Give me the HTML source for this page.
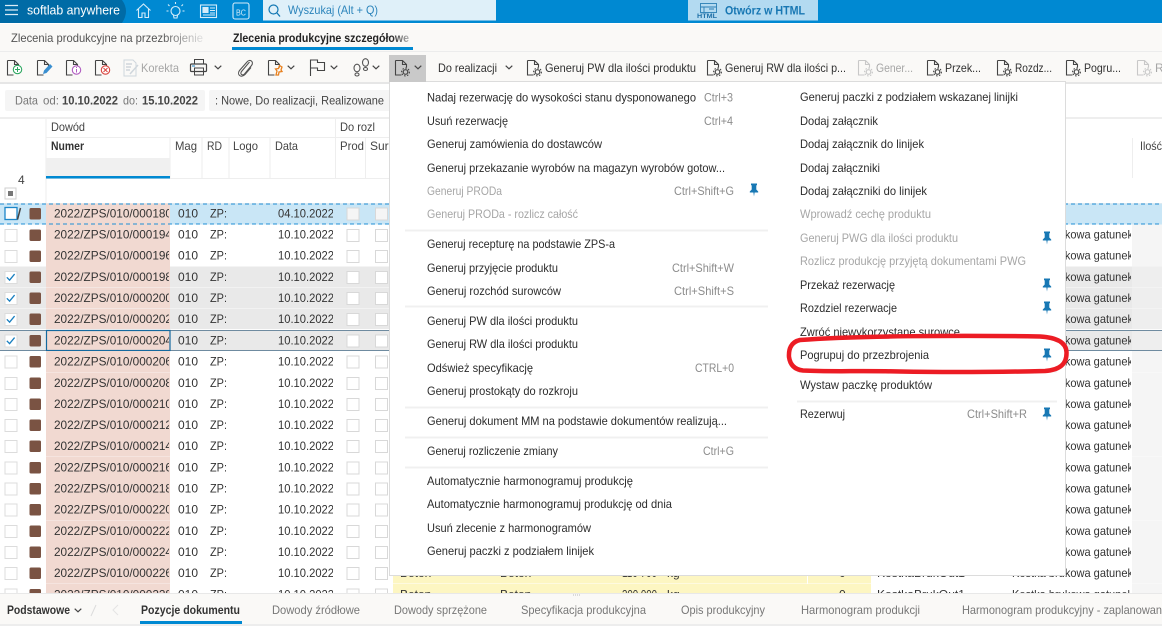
<!DOCTYPE html>
<html lang="pl"><head><meta charset="utf-8"><title>softlab anywhere</title>
<style>
html,body{margin:0;padding:0;background:#fff;overflow:hidden}
svg{display:block;font-family:"Liberation Sans",sans-serif;font-size:12px;fill:#333;filter:blur(.35px)}
.m{fill:#2c2c2c}.g{fill:#a6a6a6}.s{fill:#8c8c8c}.t{fill:#303030}.h{fill:#444}.l{fill:#777}
.i{fill:none;stroke:#444;stroke-width:1}
</style></head><body>
<svg xmlns="http://www.w3.org/2000/svg" width="1162" height="626" viewBox="0 0 1162 626">
<defs>
<symbol id="doc" viewBox="0 0 18 18" width="18" height="18" overflow="visible"><path d="M2.500 1.500h7l4 4v3M2.500 1.500v14.500h6M9.500 1.500v4h4" fill="none" stroke="currentColor" stroke-width="1.100"/></symbol>
<symbol id="gdoc" viewBox="0 0 18 18" width="18" height="18" overflow="visible"><path d="M2.500 1.500h7l4 4v3M2.500 1.500v14.500h6M9.500 1.500v4h4" fill="none" stroke="currentColor" stroke-width="1.100"/><circle cx="12.500" cy="13" r="2.300" fill="none" stroke="currentColor" stroke-width="1.200"/><circle cx="12.500" cy="13" r="3.900" fill="none" stroke="currentColor" stroke-width="1.100" stroke-dasharray="1.500 1.500"/></symbol>
<symbol id="pin" viewBox="0 0 10 14" width="10" height="14"><path d="M2 0.500h6v1.500l-.7.500v4l1.900 2v1H5.600l-.6 4-.6-4H.8v-1l1.900-2v-4L2 2z" fill="#1878b4"/></symbol>
<symbol id="chev" viewBox="0 0 8 5" width="8" height="5"><path d="M.7.700 4 3.800 7.300.700" fill="none" stroke="#444" stroke-width="1.200"/></symbol>
<symbol id="r" viewBox="0 0 1162 22" width="1162" height="22" overflow="visible">
<rect x="46" y="0" width="124" height="21.200" fill="#f1d9d1"/>
<rect x="1132" y="0" width="30" height="21.200" fill="#f5f5f5"/>
<rect x="5" y="5" width="12" height="12" fill="#fff" stroke="#dcdcdc"/>
<rect x="29.500" y="5" width="11.500" height="11.500" rx="1.500" fill="#7a5343"/>
<rect x="347" y="5" width="12" height="12" fill="#fff" stroke="#d8d8d8"/>
<rect x="375.500" y="5" width="12" height="12" fill="#fff" stroke="#d8d8d8"/>
</symbol>
<symbol id="rs" viewBox="0 0 1162 22" width="1162" height="22" overflow="visible">
<rect x="0" y="0" width="1162" height="20.600" fill="#e9e9e9"/>
<rect x="46" y="0" width="124" height="20.600" fill="#f1d9d1"/>
<rect x="1132" y="0" width="30" height="20.600" fill="#eeeeee"/>
<rect x="5" y="5" width="12" height="12" fill="#fff" stroke="#dcdcdc"/>
<path d="M6.800 10.800l2.800 2.800 5-6" fill="none" stroke="#1b80c0" stroke-width="1.300"/>
<rect x="29.500" y="5" width="11.500" height="11.500" rx="1.500" fill="#7a5343"/>
<rect x="347" y="5" width="12" height="12" fill="#fff" stroke="#d8d8d8"/>
<rect x="375.500" y="5" width="12" height="12" fill="#fff" stroke="#d8d8d8"/>
</symbol>
<clipPath id="cn"><rect x="46" y="-5" width="123" height="35"/></clipPath>
<clipPath id="cz"><rect x="205" y="-5" width="21" height="35"/></clipPath>
<clipPath id="cd"><rect x="270" y="-5" width="63" height="35"/></clipPath>
<clipPath id="ck"><rect x="1000" y="-5" width="131" height="35"/></clipPath>
<linearGradient id="fa" x1="0" x2="1"><stop offset=".78" stop-color="#555"/><stop offset="1" stop-color="#e4e4e4"/></linearGradient>
<linearGradient id="fb" x1="0" x2="1"><stop offset=".9" stop-color="#222"/><stop offset="1" stop-color="#bbb"/></linearGradient>
</defs>

<rect width="1162" height="626" fill="#fff"/>

<!-- top bar -->
<rect width="1162" height="23" fill="#0089d2"/>
<path d="M0 0H122Q130 11 122 23H0z" fill="#006ba6"/>
<path d="M5 5.500h13M5 10h13M5 14.500h13" stroke="#dcecf6" stroke-width="1.300"/>
<text x="27" y="14.500" font-size="13" fill="#fff" textLength="93" lengthAdjust="spacingAndGlyphs">softlab anywhere</text>
<g fill="none" stroke="#d5ecf9" stroke-width="1.100">
<path d="M136.500 10.500 143.500 4l7 6.500M138.500 9v8.500h3.500v-4.500h3v4.500h3.500V9"/>
<circle cx="175.500" cy="11" r="4.500"/><path d="M173.500 15.500l.5 2.500h3l.5-2.500M175.500 2v2M168 4.500l1.500 1.500M183 4.500l-1.500 1.500M166.500 11h2M184.500 11h-2"/>
<rect x="200.500" y="5" width="16" height="12.500"/><rect x="203" y="7.500" width="5" height="5" fill="#d5ecf9"/><path d="M210 8h5M210 10.500h5M210 13h5M203 15h12"/>
<rect x="233" y="3" width="16" height="16" rx="2"/>
</g>
<text x="236" y="15.500" font-size="8.500" fill="#d5ecf9" textLength="10" lengthAdjust="spacingAndGlyphs">BC</text>
<rect x="263" y="0" width="233" height="20.500" fill="#dff0f9"/>
<circle cx="273.500" cy="9.500" r="4.500" fill="none" stroke="#1277b3" stroke-width="1.200"/><path d="M277 13l3 3.500" stroke="#1277b3" stroke-width="1.300"/>
<text x="288" y="14" fill="#2b84bb" textLength="90" lengthAdjust="spacingAndGlyphs">Wyszukaj (Alt + Q)</text>
<rect x="688" y="0" width="130" height="20.500" fill="#b3daf1"/>
<g fill="none" stroke="#2b7fb5" stroke-width=".9"><rect x="700.500" y="3.500" width="16" height="9"/><path d="M700.500 7h16M704 7v5M709 9h5"/></g>
<text x="697" y="18" font-size="6.500" font-weight="bold" fill="#1c6ea6" textLength="20" lengthAdjust="spacingAndGlyphs">HTML</text>
<text x="725" y="14.500" font-weight="bold" fill="#1877b3" textLength="80" lengthAdjust="spacingAndGlyphs">Otwórz w HTML</text>

<!-- tabs -->
<rect y="24" width="1162" height="28" fill="#faf9f7"/>
<rect y="51" width="1162" height="1" fill="#ececec"/>
<text x="11" y="42" fill="url(#fa)" textLength="192" lengthAdjust="spacingAndGlyphs">Zlecenia produkcyjne na przezbrojenie</text>
<text x="233" y="42" font-weight="bold" fill="url(#fb)" textLength="176" lengthAdjust="spacingAndGlyphs">Zlecenia produkcyjne szczegółowe</text>
<rect x="232" y="47" width="181" height="3" fill="#0089d2"/>

<!-- toolbar -->
<rect y="52" width="1162" height="30" fill="#faf9f7"/>
<rect y="82" width="1162" height="2" fill="#e6e6e6"/>
<g color="#444">
<use href="#doc" x="5" y="59"/><circle cx="17.500" cy="69.500" r="4.200" fill="#fff" stroke="#2fa862" stroke-width="1.100"/><path d="M15 69.500h5M17.500 67v5" stroke="#2fa862"/>
<use href="#doc" x="35" y="59"/><path d="M43 74l1-3.500 6-6.500 2.500 2.500-6 6.500z" fill="#3a8fd0"/>
<use href="#doc" x="64" y="59"/><circle cx="76.500" cy="70" r="4.200" fill="#fff" stroke="#b05cc0" stroke-width="1.100"/><path d="M76.500 69v3.500M76.500 67v1" stroke="#b05cc0"/>
<use href="#doc" x="93" y="59"/><circle cx="105.500" cy="70" r="4.200" fill="#fff" stroke="#d9453f" stroke-width="1.100"/><path d="M103.500 68l4 4M107.500 68l-4 4" stroke="#d9453f"/>
</g>
<g fill="none" stroke="#cfd6dc"><path d="M124 60h9l3 3v13h-12z"/><path d="M126 64h6M126 67h5M126 70h4M130 74l8-9" stroke-width="1.500"/></g>
<text x="141" y="72" class="g" textLength="38" lengthAdjust="spacingAndGlyphs">Korekta</text>
<g fill="none" stroke="#444"><path d="M194.500 64v-4.500h9V64"/><rect x="190.500" y="64" width="16" height="7.500" rx="1" stroke-width="1.200"/><rect x="194.500" y="68" width="9" height="7"/><path d="M192 66h3" stroke="#1b80c0"/></g>
<use href="#chev" x="214" y="65"/>
<path d="M249.500 62l-8 9.500c-2 2.500 1 4.500 3 2.500l7-8.500c3-4-2-7-4.500-3.500l-7.500 8.500c-3 4 1.500 8 5.500 4l6-7" fill="none" stroke="#555" stroke-width="1.100"/>
<g color="#444"><use href="#doc" x="266" y="59"/></g>
<path d="M276 75l1-4-1.500-2 3-.5 1-3 2.500 1.500-1 3 1 1.500-3 .5-.5 3z" fill="none" stroke="#e8801e" stroke-width="1.300"/>
<use href="#chev" x="287" y="65"/>
<path d="M310.500 76V60h7v2.500h7v8h-7v-2.500h-7" fill="none" stroke="#444" stroke-width="1.100"/>
<use href="#chev" x="330" y="65"/>
<g fill="none" stroke="#555" stroke-width="1.100"><ellipse cx="357" cy="68" rx="3" ry="3.800"/><ellipse cx="357" cy="74.500" rx="2" ry="1.500"/><ellipse cx="365.500" cy="62.500" rx="3" ry="3.800"/><ellipse cx="365.500" cy="69" rx="2" ry="1.500"/></g>
<use href="#chev" x="372" y="65"/>
<rect x="389" y="55" width="37" height="27" fill="#c9c9c9"/>
<g color="#444"><use href="#gdoc" x="393" y="59"/></g>
<use href="#chev" x="414" y="65"/>
<text x="438" y="72" class="t" textLength="59" lengthAdjust="spacingAndGlyphs">Do realizacji</text>
<use href="#chev" x="505" y="65"/>
<g color="#444"><use href="#gdoc" x="525" y="59"/><use href="#gdoc" x="705" y="59"/><use href="#gdoc" x="925" y="59"/><use href="#gdoc" x="995" y="59"/><use href="#gdoc" x="1064" y="59"/></g>
<g color="#c8c8c8"><use href="#gdoc" x="856" y="59"/><use href="#gdoc" x="1135" y="59"/></g>
<text x="545" y="72" class="t" textLength="151" lengthAdjust="spacingAndGlyphs">Generuj PW dla ilości produktu</text>
<text x="725" y="72" class="t" textLength="121" lengthAdjust="spacingAndGlyphs">Generuj RW dla ilości p...</text>
<text x="876" y="72" class="g" textLength="37" lengthAdjust="spacingAndGlyphs">Gener...</text>
<text x="945" y="72" class="t" textLength="36" lengthAdjust="spacingAndGlyphs">Przek...</text>
<text x="1015" y="72" class="t" textLength="37" lengthAdjust="spacingAndGlyphs">Rozdz...</text>
<text x="1084" y="72" class="t" textLength="37" lengthAdjust="spacingAndGlyphs">Pogru...</text>
<text x="1155" y="72" class="g">R</text>

<!-- filter bar -->
<rect x="5" y="90" width="200" height="21" rx="2" fill="#f5f5f5"/>
<rect x="209" y="90" width="185" height="21" rx="2" fill="#f5f5f5"/>
<text x="15" y="104.500" class="l" textLength="23" lengthAdjust="spacingAndGlyphs">Data</text>
<text x="43" y="104.500" class="l" textLength="16" lengthAdjust="spacingAndGlyphs">od:</text>
<text x="62" y="104.500" font-weight="bold" fill="#444" textLength="56" lengthAdjust="spacingAndGlyphs">10.10.2022</text>
<text x="123" y="104.500" class="l" textLength="15" lengthAdjust="spacingAndGlyphs">do:</text>
<text x="142" y="104.500" font-weight="bold" fill="#444" textLength="56" lengthAdjust="spacingAndGlyphs">15.10.2022</text>
<text x="215" y="104.500" fill="#444" textLength="169" lengthAdjust="spacingAndGlyphs">: Nowe, Do realizacji, Realizowane</text>

<!-- grid header -->
<rect y="117" width="1162" height="2" fill="#eeeeee"/>
<path d="M46 137.500H389M170 138v40M202 138v40M229 138v40M270 138v40M335.500 119v59M365.500 138v40M46 178.500H389M46 119v85M0 203.500H1162M1132.500 138v40" stroke="#eeeeee" fill="none"/>
<text x="51" y="131" class="h" textLength="34" lengthAdjust="spacingAndGlyphs">Dowód</text>
<text x="340" y="131" class="h" textLength="35" lengthAdjust="spacingAndGlyphs">Do rozl</text>
<text x="51" y="150" font-weight="bold" fill="#333" textLength="33" lengthAdjust="spacingAndGlyphs">Numer</text>
<rect x="46" y="158" width="124" height="18" fill="#f0f0f0"/>
<rect x="46" y="176" width="124" height="2.500" fill="#0089d2"/>
<text x="175" y="150" class="h" textLength="22" lengthAdjust="spacingAndGlyphs">Mag</text>
<text x="207" y="150" class="h" textLength="15" lengthAdjust="spacingAndGlyphs">RD</text>
<text x="233" y="150" class="h" textLength="25" lengthAdjust="spacingAndGlyphs">Logo</text>
<text x="275" y="150" class="h" textLength="23" lengthAdjust="spacingAndGlyphs">Data</text>
<text x="340" y="150" class="h" textLength="24" lengthAdjust="spacingAndGlyphs">Prod</text>
<text x="370" y="150" class="h">Sur</text>
<text x="1140" y="150" class="h" textLength="22" lengthAdjust="spacingAndGlyphs">Ilość</text>
<text x="18" y="184" class="h">4</text>
<rect x="5" y="188" width="11" height="11" fill="#fff" stroke="#cfcfcf"/><rect x="8" y="191" width="5" height="5" fill="#777"/>

<!-- rows -->
<g transform="translate(0,203.500)">
<rect width="1162" height="21" fill="#c9e6f6"/>
<rect x="46" y="0" width="124" height="21" fill="#f1d9d1"/>
<rect x="5" y="4" width="12" height="12" fill="#fff" stroke="#1c86c8" stroke-width="1.300"/>
<path d="M17.500 16l3-11.500" stroke="#444" stroke-width="1.500"/>
<rect x="29.500" y="4.500" width="11.500" height="11.500" rx="1.500" fill="#7a5343"/>
<rect x="347" y="4.500" width="12" height="12" fill="#f5f5f5" stroke="#d8d8d8"/>
<rect x="375.500" y="4.500" width="12" height="12" fill="#f5f5f5" stroke="#d8d8d8"/>
<path d="M0 .500H1162M0 20.500H1162" stroke="#1e8fd5" stroke-dasharray="4 3" fill="none"/>
<text x="54" y="14" clip-path="url(#cn)" textLength="118" lengthAdjust="spacingAndGlyphs">2022/ZPS/010/000180</text><text x="178" y="14">010</text><text x="210" y="14" clip-path="url(#cz)" textLength="17" lengthAdjust="spacingAndGlyphs">ZP:</text><text x="278" y="14" textLength="56" lengthAdjust="spacingAndGlyphs" clip-path="url(#cd)">04.10.2022</text>
</g>
<g transform="translate(0,224.500)"><use href="#r"/><text x="54" y="14" clip-path="url(#cn)" textLength="118" lengthAdjust="spacingAndGlyphs">2022/ZPS/010/000194</text><text x="178" y="14">010</text><text x="210" y="14" clip-path="url(#cz)" textLength="17" lengthAdjust="spacingAndGlyphs">ZP:</text><text x="278" y="14" textLength="56" lengthAdjust="spacingAndGlyphs" clip-path="url(#cd)">10.10.2022</text><text x="1012" y="14" clip-path="url(#ck)" textLength="121" lengthAdjust="spacingAndGlyphs">Kostka brukowa gatunek</text></g>
<g transform="translate(0,245.500)"><use href="#r"/><text x="54" y="14" clip-path="url(#cn)" textLength="118" lengthAdjust="spacingAndGlyphs">2022/ZPS/010/000196</text><text x="178" y="14">010</text><text x="210" y="14" clip-path="url(#cz)" textLength="17" lengthAdjust="spacingAndGlyphs">ZP:</text><text x="278" y="14" textLength="56" lengthAdjust="spacingAndGlyphs" clip-path="url(#cd)">10.10.2022</text><text x="1012" y="14" clip-path="url(#ck)" textLength="121" lengthAdjust="spacingAndGlyphs">Kostka brukowa gatunek</text></g>
<g transform="translate(0,266.500)"><use href="#rs"/><text x="54" y="14.500" clip-path="url(#cn)" textLength="118" lengthAdjust="spacingAndGlyphs">2022/ZPS/010/000198</text><text x="178" y="14.500">010</text><text x="210" y="14.500" clip-path="url(#cz)" textLength="17" lengthAdjust="spacingAndGlyphs">ZP:</text><text x="278" y="14.500" textLength="56" lengthAdjust="spacingAndGlyphs" clip-path="url(#cd)">10.10.2022</text><text x="1012" y="14.500" clip-path="url(#ck)" textLength="121" lengthAdjust="spacingAndGlyphs">Kostka brukowa gatunek</text></g>
<g transform="translate(0,287.500)"><use href="#rs"/><text x="54" y="14.500" clip-path="url(#cn)" textLength="118" lengthAdjust="spacingAndGlyphs">2022/ZPS/010/000200</text><text x="178" y="14.500">010</text><text x="210" y="14.500" clip-path="url(#cz)" textLength="17" lengthAdjust="spacingAndGlyphs">ZP:</text><text x="278" y="14.500" textLength="56" lengthAdjust="spacingAndGlyphs" clip-path="url(#cd)">10.10.2022</text><text x="1012" y="14.500" clip-path="url(#ck)" textLength="121" lengthAdjust="spacingAndGlyphs">Kostka brukowa gatunek</text></g>
<g transform="translate(0,308.500)"><use href="#rs"/><text x="54" y="14.500" clip-path="url(#cn)" textLength="118" lengthAdjust="spacingAndGlyphs">2022/ZPS/010/000202</text><text x="178" y="14.500">010</text><text x="210" y="14.500" clip-path="url(#cz)" textLength="17" lengthAdjust="spacingAndGlyphs">ZP:</text><text x="278" y="14.500" textLength="56" lengthAdjust="spacingAndGlyphs" clip-path="url(#cd)">10.10.2022</text><text x="1012" y="14.500" clip-path="url(#ck)" textLength="121" lengthAdjust="spacingAndGlyphs">Kostka brukowa gatunek</text></g>
<g transform="translate(0,330)"><use href="#rs"/><path d="M0 .500H1162M0 20.500H1162" stroke="#6f8ba0" fill="none"/><rect x="46.500" y=".500" width="123.500" height="20" fill="none" stroke="#14699f" stroke-width="1.200"/><text x="54" y="14.500" clip-path="url(#cn)" textLength="118" lengthAdjust="spacingAndGlyphs">2022/ZPS/010/000204</text><text x="178" y="14.500">010</text><text x="210" y="14.500" clip-path="url(#cz)" textLength="17" lengthAdjust="spacingAndGlyphs">ZP:</text><text x="278" y="14.500" textLength="56" lengthAdjust="spacingAndGlyphs" clip-path="url(#cd)">10.10.2022</text><text x="1012" y="14.500" clip-path="url(#ck)" textLength="121" lengthAdjust="spacingAndGlyphs">Kostka brukowa gatunek</text></g>
<g transform="translate(0,351)"><use href="#r"/><text x="54" y="14.500" clip-path="url(#cn)" textLength="118" lengthAdjust="spacingAndGlyphs">2022/ZPS/010/000206</text><text x="178" y="14.500">010</text><text x="210" y="14.500" clip-path="url(#cz)" textLength="17" lengthAdjust="spacingAndGlyphs">ZP:</text><text x="278" y="14.500" textLength="56" lengthAdjust="spacingAndGlyphs" clip-path="url(#cd)">10.10.2022</text><text x="1012" y="14.500" clip-path="url(#ck)" textLength="121" lengthAdjust="spacingAndGlyphs">Kostka brukowa gatunek</text></g>
<g transform="translate(0,372.500)"><use href="#r"/><text x="54" y="14.500" clip-path="url(#cn)" textLength="118" lengthAdjust="spacingAndGlyphs">2022/ZPS/010/000208</text><text x="178" y="14.500">010</text><text x="210" y="14.500" clip-path="url(#cz)" textLength="17" lengthAdjust="spacingAndGlyphs">ZP:</text><text x="278" y="14.500" textLength="56" lengthAdjust="spacingAndGlyphs" clip-path="url(#cd)">10.10.2022</text><text x="1012" y="14.500" clip-path="url(#ck)" textLength="121" lengthAdjust="spacingAndGlyphs">Kostka brukowa gatunek</text></g>
<g transform="translate(0,393.500)"><use href="#r"/><text x="54" y="14.500" clip-path="url(#cn)" textLength="118" lengthAdjust="spacingAndGlyphs">2022/ZPS/010/000210</text><text x="178" y="14.500">010</text><text x="210" y="14.500" clip-path="url(#cz)" textLength="17" lengthAdjust="spacingAndGlyphs">ZP:</text><text x="278" y="14.500" textLength="56" lengthAdjust="spacingAndGlyphs" clip-path="url(#cd)">10.10.2022</text><text x="1012" y="14.500" clip-path="url(#ck)" textLength="121" lengthAdjust="spacingAndGlyphs">Kostka brukowa gatunek</text></g>
<g transform="translate(0,414.500)"><use href="#r"/><text x="54" y="14.500" clip-path="url(#cn)" textLength="118" lengthAdjust="spacingAndGlyphs">2022/ZPS/010/000212</text><text x="178" y="14.500">010</text><text x="210" y="14.500" clip-path="url(#cz)" textLength="17" lengthAdjust="spacingAndGlyphs">ZP:</text><text x="278" y="14.500" textLength="56" lengthAdjust="spacingAndGlyphs" clip-path="url(#cd)">10.10.2022</text><text x="1012" y="14.500" clip-path="url(#ck)" textLength="121" lengthAdjust="spacingAndGlyphs">Kostka brukowa gatunek</text></g>
<g transform="translate(0,435.500)"><use href="#r"/><text x="54" y="14.500" clip-path="url(#cn)" textLength="118" lengthAdjust="spacingAndGlyphs">2022/ZPS/010/000214</text><text x="178" y="14.500">010</text><text x="210" y="14.500" clip-path="url(#cz)" textLength="17" lengthAdjust="spacingAndGlyphs">ZP:</text><text x="278" y="14.500" textLength="56" lengthAdjust="spacingAndGlyphs" clip-path="url(#cd)">10.10.2022</text><text x="1012" y="14.500" clip-path="url(#ck)" textLength="121" lengthAdjust="spacingAndGlyphs">Kostka brukowa gatunek</text></g>
<g transform="translate(0,457)"><use href="#r"/><text x="54" y="14.500" clip-path="url(#cn)" textLength="118" lengthAdjust="spacingAndGlyphs">2022/ZPS/010/000216</text><text x="178" y="14.500">010</text><text x="210" y="14.500" clip-path="url(#cz)" textLength="17" lengthAdjust="spacingAndGlyphs">ZP:</text><text x="278" y="14.500" textLength="56" lengthAdjust="spacingAndGlyphs" clip-path="url(#cd)">10.10.2022</text><text x="1012" y="14.500" clip-path="url(#ck)" textLength="121" lengthAdjust="spacingAndGlyphs">Kostka brukowa gatunek</text></g>
<g transform="translate(0,478)"><use href="#r"/><text x="54" y="14.500" clip-path="url(#cn)" textLength="118" lengthAdjust="spacingAndGlyphs">2022/ZPS/010/000218</text><text x="178" y="14.500">010</text><text x="210" y="14.500" clip-path="url(#cz)" textLength="17" lengthAdjust="spacingAndGlyphs">ZP:</text><text x="278" y="14.500" textLength="56" lengthAdjust="spacingAndGlyphs" clip-path="url(#cd)">10.10.2022</text><text x="1012" y="14.500" clip-path="url(#ck)" textLength="121" lengthAdjust="spacingAndGlyphs">Kostka brukowa gatunek</text></g>
<g transform="translate(0,499)"><use href="#r"/><text x="54" y="14.500" clip-path="url(#cn)" textLength="118" lengthAdjust="spacingAndGlyphs">2022/ZPS/010/000220</text><text x="178" y="14.500">010</text><text x="210" y="14.500" clip-path="url(#cz)" textLength="17" lengthAdjust="spacingAndGlyphs">ZP:</text><text x="278" y="14.500" textLength="56" lengthAdjust="spacingAndGlyphs" clip-path="url(#cd)">10.10.2022</text><text x="1012" y="14.500" clip-path="url(#ck)" textLength="121" lengthAdjust="spacingAndGlyphs">Kostka brukowa gatunek</text></g>
<g transform="translate(0,520.500)"><use href="#r"/><text x="54" y="14.500" clip-path="url(#cn)" textLength="118" lengthAdjust="spacingAndGlyphs">2022/ZPS/010/000222</text><text x="178" y="14.500">010</text><text x="210" y="14.500" clip-path="url(#cz)" textLength="17" lengthAdjust="spacingAndGlyphs">ZP:</text><text x="278" y="14.500" textLength="56" lengthAdjust="spacingAndGlyphs" clip-path="url(#cd)">10.10.2022</text><text x="1012" y="14.500" clip-path="url(#ck)" textLength="121" lengthAdjust="spacingAndGlyphs">Kostka brukowa gatunek</text></g>
<g transform="translate(0,541.500)"><use href="#r"/><text x="54" y="14.500" clip-path="url(#cn)" textLength="118" lengthAdjust="spacingAndGlyphs">2022/ZPS/010/000224</text><text x="178" y="14.500">010</text><text x="210" y="14.500" clip-path="url(#cz)" textLength="17" lengthAdjust="spacingAndGlyphs">ZP:</text><text x="278" y="14.500" textLength="56" lengthAdjust="spacingAndGlyphs" clip-path="url(#cd)">10.10.2022</text><text x="1012" y="14.500" clip-path="url(#ck)" textLength="121" lengthAdjust="spacingAndGlyphs">Kostka brukowa gatunek</text></g>
<g transform="translate(0,562.500)"><use href="#r"/><rect x="393" width="478" height="21" fill="#fdf6c2"/><rect x="807" width="1" height="21" fill="#fff"/><text x="400" y="14.500">Beton</text><text x="500" y="14.500">Beton</text><text x="622" y="14.500" textLength="35" lengthAdjust="spacingAndGlyphs">110 700</text><text x="667" y="14.500">kg</text><text x="839" y="14.500">0</text><text x="877" y="14.500" textLength="88" lengthAdjust="spacingAndGlyphs">KostkaBrukOut1</text><text x="54" y="14.500" clip-path="url(#cn)" textLength="118" lengthAdjust="spacingAndGlyphs">2022/ZPS/010/000226</text><text x="178" y="14.500">010</text><text x="210" y="14.500" clip-path="url(#cz)" textLength="17" lengthAdjust="spacingAndGlyphs">ZP:</text><text x="278" y="14.500" textLength="56" lengthAdjust="spacingAndGlyphs" clip-path="url(#cd)">10.10.2022</text><text x="1012" y="14.500" clip-path="url(#ck)" textLength="121" lengthAdjust="spacingAndGlyphs">Kostka brukowa gatunek</text></g>
<g transform="translate(0,584)"><use href="#r"/><rect x="393" width="478" height="21" fill="#fdf6c2"/><text x="400" y="14.500">Beton</text><text x="500" y="14.500">Beton</text><text x="622" y="14.500" textLength="35" lengthAdjust="spacingAndGlyphs">200 000</text><text x="667" y="14.500">kg</text><text x="839" y="14.500">0</text><text x="877" y="14.500" textLength="88" lengthAdjust="spacingAndGlyphs">KostkaBrukOut1</text><text x="54" y="14.500" clip-path="url(#cn)" textLength="118" lengthAdjust="spacingAndGlyphs">2022/ZPS/010/000228</text><text x="178" y="14.500">010</text><text x="210" y="14.500" clip-path="url(#cz)" textLength="17" lengthAdjust="spacingAndGlyphs">ZP:</text><text x="278" y="14.500" textLength="56" lengthAdjust="spacingAndGlyphs" clip-path="url(#cd)">10.10.2022</text><text x="1012" y="14.500" clip-path="url(#ck)" textLength="121" lengthAdjust="spacingAndGlyphs">Kostka brukowa gatunek</text></g>

<!-- dropdown menu -->
<rect x="389.500" y="81.500" width="676" height="494" fill="#fff" stroke="#dcdcdc"/>
<rect x="389" y="55" width="37" height="27" fill="#c9c9c9"/>
<g color="#444"><use href="#gdoc" x="393" y="59"/></g><use href="#chev" x="414" y="65"/>
<path d="M405 230.500H768M405 306.500H768M405 407.500H768M405 437.500H768M405 467.500H768M797 371.500H1057M797 401.500H1057" stroke="#f0f0f0" stroke-width="2"/>
<g class="m">
<text x="427" y="101.500" class="m" textLength="269" lengthAdjust="spacingAndGlyphs">Nadaj rezerwację do wysokości stanu dysponowanego</text>
<text x="427" y="125" class="m" textLength="81" lengthAdjust="spacingAndGlyphs">Usuń rezerwację</text>
<text x="427" y="148" class="m" textLength="175" lengthAdjust="spacingAndGlyphs">Generuj zamówienia do dostawców</text>
<text x="427" y="172" class="m" textLength="298" lengthAdjust="spacingAndGlyphs">Generuj przekazanie wyrobów na magazyn wyrobów gotow...</text>
<text x="427" y="195" class="g" textLength="75" lengthAdjust="spacingAndGlyphs">Generuj PRODa</text>
<text x="427" y="218" class="g" textLength="151" lengthAdjust="spacingAndGlyphs">Generuj PRODa - rozlicz całość</text>
<text x="427" y="248" class="m" textLength="188" lengthAdjust="spacingAndGlyphs">Generuj recepturę na podstawie ZPS-a</text>
<text x="427" y="272" class="m" textLength="131" lengthAdjust="spacingAndGlyphs">Generuj przyjęcie produktu</text>
<text x="427" y="295" class="m" textLength="134" lengthAdjust="spacingAndGlyphs">Generuj rozchód surowców</text>
<text x="427" y="325" class="m" textLength="151" lengthAdjust="spacingAndGlyphs">Generuj PW dla ilości produktu</text>
<text x="427" y="348" class="m" textLength="151" lengthAdjust="spacingAndGlyphs">Generuj RW dla ilości produktu</text>
<text x="427" y="372" class="m" textLength="106" lengthAdjust="spacingAndGlyphs">Odśwież specyfikację</text>
<text x="427" y="395" class="m" textLength="151" lengthAdjust="spacingAndGlyphs">Generuj prostokąty do rozkroju</text>
<text x="427" y="425" class="m" textLength="300" lengthAdjust="spacingAndGlyphs">Generuj dokument MM na podstawie dokumentów realizują...</text>
<text x="427" y="455" class="m" textLength="131" lengthAdjust="spacingAndGlyphs">Generuj rozliczenie zmiany</text>
<text x="427" y="485" class="m" textLength="206" lengthAdjust="spacingAndGlyphs">Automatycznie harmonogramuj produkcję</text>
<text x="427" y="508" class="m" textLength="245" lengthAdjust="spacingAndGlyphs">Automatycznie harmonogramuj produkcję od dnia</text>
<text x="427" y="532" class="m" textLength="164" lengthAdjust="spacingAndGlyphs">Usuń zlecenie z harmonogramów</text>
<text x="427" y="555" class="m" textLength="167" lengthAdjust="spacingAndGlyphs">Generuj paczki z podziałem linijek</text>
<text x="704" y="101.500" class="s" textLength="29" lengthAdjust="spacingAndGlyphs">Ctrl+3</text>
<text x="704" y="125" class="s" textLength="29" lengthAdjust="spacingAndGlyphs">Ctrl+4</text>
<text x="674" y="195" class="s" textLength="60" lengthAdjust="spacingAndGlyphs">Ctrl+Shift+G</text>
<text x="672" y="272" class="s" textLength="62" lengthAdjust="spacingAndGlyphs">Ctrl+Shift+W</text>
<text x="674" y="295" class="s" textLength="60" lengthAdjust="spacingAndGlyphs">Ctrl+Shift+S</text>
<text x="695" y="372" class="s" textLength="39" lengthAdjust="spacingAndGlyphs">CTRL+0</text>
<text x="703" y="455" class="s" textLength="31" lengthAdjust="spacingAndGlyphs">Ctrl+G</text>
<text x="800" y="101" class="m" textLength="218" lengthAdjust="spacingAndGlyphs">Generuj paczki z podziałem wskazanej linijki</text>
<text x="800" y="125" class="m" textLength="78" lengthAdjust="spacingAndGlyphs">Dodaj załącznik</text>
<text x="800" y="148" class="m" textLength="124" lengthAdjust="spacingAndGlyphs">Dodaj załącznik do linijek</text>
<text x="800" y="172" class="m" textLength="80" lengthAdjust="spacingAndGlyphs">Dodaj załączniki</text>
<text x="800" y="195" class="m" textLength="127" lengthAdjust="spacingAndGlyphs">Dodaj załączniki do linijek</text>
<text x="800" y="218" class="g" textLength="131" lengthAdjust="spacingAndGlyphs">Wprowadź cechę produktu</text>
<text x="800" y="242" class="g" textLength="158" lengthAdjust="spacingAndGlyphs">Generuj PWG dla ilości produktu</text>
<text x="800" y="265" class="g" textLength="226" lengthAdjust="spacingAndGlyphs">Rozlicz produkcję przyjętą dokumentami PWG</text>
<text x="800" y="289" class="m" textLength="95" lengthAdjust="spacingAndGlyphs">Przekaż rezerwację</text>
<text x="800" y="312" class="m" textLength="97" lengthAdjust="spacingAndGlyphs">Rozdziel rezerwacje</text>
<text x="800" y="336" class="m" textLength="160" lengthAdjust="spacingAndGlyphs">Zwróć niewykorzystane surowce</text>
<text x="800" y="359" class="m" textLength="129" lengthAdjust="spacingAndGlyphs">Pogrupuj do przezbrojenia</text>
<text x="800" y="389" class="m" textLength="132" lengthAdjust="spacingAndGlyphs">Wystaw paczkę produktów</text>
<text x="800" y="418" class="m" textLength="45" lengthAdjust="spacingAndGlyphs">Rezerwuj</text>
<text x="967" y="418" class="s" textLength="60" lengthAdjust="spacingAndGlyphs">Ctrl+Shift+R</text>
</g>
<use href="#pin" x="749" y="183"/>
<use href="#pin" x="1042" y="231"/>
<use href="#pin" x="1042" y="278"/>
<use href="#pin" x="1042" y="301"/>
<use href="#pin" x="1042" y="348"/>
<use href="#pin" x="1042" y="407"/>

<!-- red marker -->
<path d="M800 340C850 336 960 335 1040 336.500 1058 337.500 1066 343 1066.500 352 1067 364 1060 370 1045 371 1000 372 950 372.500 900 371.500 860 370.500 830 372 803 370.500 794 369.500 790 364 789 357 788.500 349 791 342 800 340z" fill="none" stroke="#ec1c24" stroke-width="4.500"/>

<!-- bottom bar -->
<rect y="594" width="1162" height="32" fill="#faf9f7"/>
<rect y="593" width="1162" height="1" fill="#e8e8e8"/>
<rect y="624" width="1162" height="2" fill="#ededed"/>
<path d="M573 595h8" stroke="#bbb" stroke-dasharray="1 1"/>
<text x="7" y="614" font-weight="bold" fill="#333" textLength="63" lengthAdjust="spacingAndGlyphs">Podstawowe</text>
<use href="#chev" x="74" y="608"/>
<path d="M91 616l5-11" stroke="#dcdcdc"/><path d="M118 605l-5 5 5 5" fill="none" stroke="#e4e4e4"/>
<text x="141" y="614" font-weight="bold" fill="#333" textLength="99" lengthAdjust="spacingAndGlyphs">Pozycje dokumentu</text>
<rect x="140" y="621" width="102" height="3" fill="#0089d2"/>
<text x="272" y="614" class="l" textLength="88" lengthAdjust="spacingAndGlyphs">Dowody źródłowe</text>
<text x="394" y="614" class="l" textLength="93" lengthAdjust="spacingAndGlyphs">Dowody sprzężone</text>
<text x="521" y="614" class="l" textLength="125" lengthAdjust="spacingAndGlyphs">Specyfikacja produkcyjna</text>
<text x="681" y="614" class="l" textLength="84" lengthAdjust="spacingAndGlyphs">Opis produkcyjny</text>
<text x="801" y="614" class="l" textLength="119" lengthAdjust="spacingAndGlyphs">Harmonogram produkcji</text>
<text x="962" y="614" class="l" textLength="200" lengthAdjust="spacingAndGlyphs">Harmonogram produkcyjny - zaplanowan</text>
</svg>
</body></html>
